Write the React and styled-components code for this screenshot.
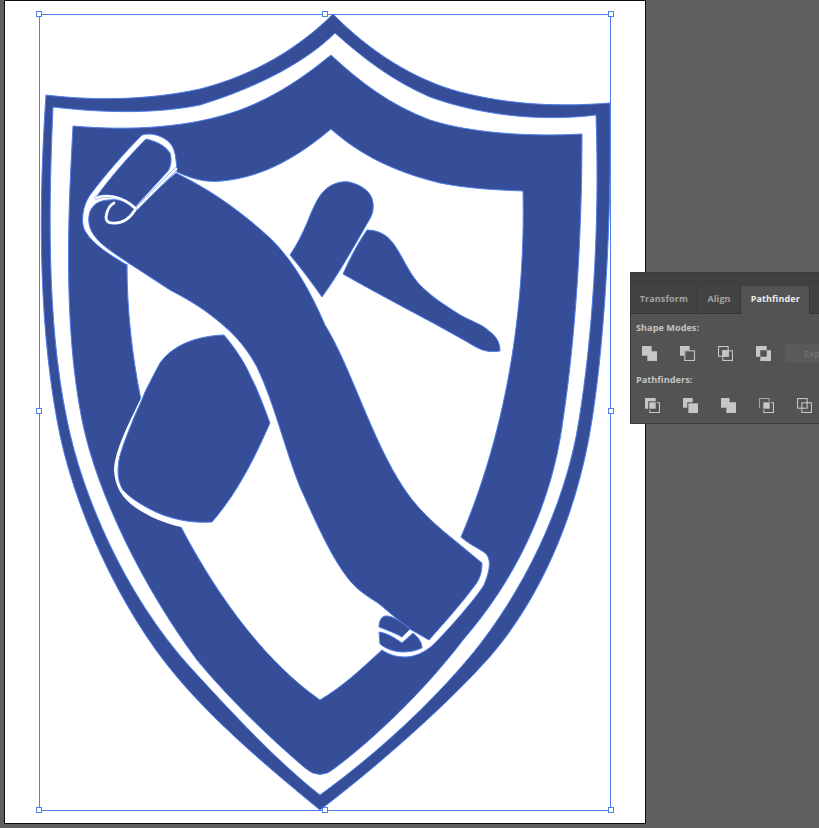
import React from "react";
import styled, { createGlobalStyle } from "styled-components";

const Global = createGlobalStyle`
  html, body { margin: 0; padding: 0; width: 100%; height: 100%; overflow: hidden; background: #5f5f5f; }
  #root { height: 100%; }
`;

const Workspace = styled.main`
  position: relative;
  width: 819px;
  height: 828px;
  overflow: hidden;
  background: #5f5f5f;
  padding-left: 4px;
  box-sizing: border-box;
`;

const Artboard = styled.div`
  width: 640px;
  height: 822px;
  background: #fff;
  border: 1px solid #0c0c0c;
`;

const Drawing = styled.svg`
  display: block;
  width: 640px;
  height: 822px;
`;

const Blue = styled.path`
  fill: #364e97;
  stroke: #4f7fec;
  stroke-width: 1;
`;

const Paper = styled.path`
  fill: #fff;
  stroke: ${(p) => (p.$edged ? "#4f7fec" : "none")};
  stroke-width: 1;
`;

const Edge = styled.path`
  fill: none;
  stroke: #4f7fec;
  stroke-width: 1;
`;

const Line = styled.path`
  fill: none;
  stroke: ${(p) => (p.$halo ? "#6f97ef" : "#fff")};
  stroke-width: ${(p) => (p.$halo ? 3.2 : 2.4)};
  stroke-linecap: round;
  stroke-linejoin: round;
`;

const Bounds = styled.rect`
  fill: none;
  stroke: #4f7fec;
  stroke-width: 1;
`;

const Handle = styled.rect`
  fill: #fff;
  stroke: #4f7fec;
  stroke-width: 1;
`;

const Panel = styled.aside`
  position: absolute;
  left: 630px;
  top: 272px;
  width: 200px;
  height: 152px;
  background: #535353;
  border: 1px solid #3a3a3a;
  border-right: 0;
  box-sizing: border-box;
  font-family: "Open Sans", "Liberation Sans", sans-serif;
`;

const TitleBar = styled.div`
  height: 13px;
  background: #404040;
`;

const Tabs = styled.div`
  display: flex;
  height: 27px;
  background: #404040;
  border-bottom: 1px solid #363636;
`;

const Tab = styled.div`
  width: ${(p) => p.$w}px;
  display: flex;
  align-items: center;
  justify-content: center;
  box-sizing: border-box;
  padding-bottom: 3px;
  font-size: 9px;
  font-weight: 700;
  letter-spacing: 0.1px;
  color: ${(p) => (p.$active ? "#ececec" : "#a2a2a2")};
  background: ${(p) => (p.$active ? "#535353" : "#434343")};
  border-right: 1px solid #363636;
  height: ${(p) => (p.$active ? "28px" : "27px")};
`;

const Heading = styled.div`
  font-size: 9.2px;
  font-weight: 700;
  line-height: 14px;
  color: #c4c4c4;
  padding-left: 5px;
  margin-top: ${(p) => p.$top}px;
`;

const IconRow = styled.div`
  display: flex;
  align-items: center;
  height: 20px;
  padding-left: ${(p) => p.$pad}px;
  gap: 23px;
  margin-top: ${(p) => p.$top}px;
`;

const Glyph = styled.svg`
  flex: none;
  display: block;
  width: 15px;
  height: 15px;
`;

const Expand = styled.button`
  flex: none;
  width: 60px;
  height: 19px;
  margin-left: -9px;
  padding: 0 0 0 19px;
  text-align: left;
  border: 0;
  background: #5a5a5a;
  color: #6f6f6f;
  font: 700 9px "Open Sans", "Liberation Sans", sans-serif;
`;

const G = "#c6c6c6";

const Solid = (p) => <rect {...p} fill={G} />;
const Hollow = (p) => <rect {...p} fill="none" stroke={G} strokeWidth="1" />;

const ICONS = {
  unite: <path d="M0 0h9v5h5v9H5V9H0z" fill={G} />,
  minus: (
    <>
      <Hollow x="4.5" y="4.5" width="9" height="9" />
      <path d="M0 0h9v4H4v5H0z" fill={G} />
    </>
  ),
  intersect: (
    <>
      <Hollow x="0.5" y="0.5" width="9" height="9" />
      <Hollow x="4.5" y="4.5" width="9" height="9" />
      <Solid x="4" y="4" width="6" height="6" />
    </>
  ),
  exclude: <path fillRule="evenodd" d="M0 0h10v4h4v10H4v-4H0zM4 4v6h6V4z" fill={G} />,
  divide: (
    <>
      <path d="M0 0h10v3H3v7H0z" fill={G} />
      <rect x="4" y="4" width="6" height="6" fill={G} />
      <path d="M11 4.5h2.5v9h-9V11" fill="none" stroke={G} />
    </>
  ),
  trim: (
    <>
      <path d="M0 0h9v4H4v5H0z" fill={G} />
      <rect x="5" y="5" width="9" height="9" fill={G} />
    </>
  ),
  merge: <path d="M0 0h8v4h6v10H5V9H0z" fill={G} />,
  crop: (
    <>
      <path d="M0.5 9.5v-9h9v3" fill="none" stroke="#a8a8a8" />
      <rect x="4" y="4" width="6" height="6" fill={G} />
      <path d="M11 4.5h2.5v9h-9V11" fill="none" stroke={G} />
    </>
  ),
  outline: (
    <>
      <Hollow x="0.5" y="0.5" width="9" height="9" />
      <Hollow x="4.5" y="4.5" width="9" height="9" />
    </>
  ),
};

const Icon = ({ name }) => <Glyph viewBox="0 0 14 14">{ICONS[name]}</Glyph>;

const OUTER =
  "M333,14 C300,47 255,75 200,89 C150,100 95,101 46,95 C41,170 35,300 57,420 C72,505 120,610 177,677 C215,722 265,765 320,810 C370,772 440,712 487,660 C530,612 575,530 592,420 C604,345 612,220 610,103 C560,107 510,105 460,92 C415,80 370,52 333,14 Z";
const GAP =
  "M335,33 C310,58 265,85 200,105 C150,115 95,112 53,107 C49,200 46,320 67,420 C82,495 125,595 190,667 C225,705 275,760 320,795 C375,755 430,705 473,653 C520,595 565,510 579,420 C592,340 600,230 596,115 C540,122 480,115 430,97 C395,82 365,60 335,33 Z";
const INNER =
  "M331,55 C310,72 280,95 240,110 C190,128 130,131 73,126 C69,200 62,320 82,420 C97,495 145,590 197,660 C230,700 270,738 305,768 Q320,781 335,768 C375,738 425,690 463,640 C515,580 552,505 563,420 C575,340 582,240 582,134 C530,137 470,133 430,120 C390,105 360,82 331,55 Z";
const FIELD =
  "M331,129 C360,155 395,172 440,183 C470,189 500,190 523,191 C525,280 515,410 461,537 L382,650 C362,668 345,685 320,700 C270,665 222,605 181,527 L141,400 C132,355 127,310 127,265 L177,172 C190,178 205,183 222,181 C265,177 300,155 331,129 Z";
const TOP_CURVE =
  "M177,172 C176,160 176,150 170,143 C163,136 152,132 142,135 C125,152 105,175 90,195 C83,205 80,222 85,231 C93,245 112,256 127,265";
const END_CURVE =
  "M461,537 C470,545 480,549 485,553 C491,558 491,568 484,585 C476,598 450,628 433,645 C425,652 415,657 405,657 C395,657 388,654 382,650";
const BODY =
  "M176,173 C215,192 245,215 270,238 C295,262 312,295 325,325 C350,365 372,440 403,487 C415,505 425,515 442,530 L482,563 C482,572 480,578 476,584 C462,603 445,622 429,640 L408,628 L378,603 C365,595 355,588 347,577 C330,555 315,520 300,487 C285,450 275,405 257,367 C245,345 232,332 217,320 C200,306 185,298 170,290 L127,262 C115,254 103,246 97,239 C90,231 88,224 89,216 C90,208 95,203 102,201 C115,198 128,200 136,208 Z";
const ROLL =
  "M146,139 C155,141 165,145 170,153 C172,160 171,166 168,171 L135,207 C128,199 112,193 97,196 C110,178 128,157 146,139 Z";
const CURL_TOP = "M96,198 C106,194 122,196 135,208";
const CURL_RING = "M135,210 C130,218 122,224 112,223 C108,223 106,221 106,217 C107,210 110,205 114,203";
const ROLL_LINE = "M176,169 L136,209";
const FOOT_A =
  "M379,627 C379,621 381,617 385,616 C392,615 402,622 410,629 L402,637 C395,633 387,630 379,627 Z";
const FOOT_B =
  "M379,632 C387,633 395,638 402,643 L413,633 C418,637 422,642 422,648 C415,651 409,652 403,652 C395,652 386,649 380,644 Z";
const HAMMER_HALO =
  "M141,398 C128,425 115,450 114,470 C115,485 120,495 132,505 C145,515 165,524 181,527 L212,523 L230,460 Z";
const HAMMER =
  "M224,335 C235,348 245,363 250,375 C258,390 264,407 270,423 C258,450 240,490 212,522 C195,523 180,521 163,515 C150,510 132,500 123,490 C118,482 117,472 119,460 C122,446 130,428 133,420 C137,410 140,405 145,392 C150,382 155,372 160,363 C172,346 195,336 224,335 Z";
const GRIP =
  "M290,255 C297,245 303,232 307,223 C313,208 318,196 325,190 C332,183 342,181 349,182 C362,185 372,192 373,203 C374,210 372,216 368,222 C352,250 338,275 322,297 C312,283 301,268 290,255 Z";
const HEAD =
  "M367,230 C378,230 387,235 393,243 C402,255 408,272 420,285 C433,298 445,305 457,313 C470,321 482,324 489,331 C496,336 500,342 500,351 C494,352 487,352 480,349 C473,346 468,342 462,339 C425,318 385,298 343,274 C350,258 358,243 367,230 Z";

const handles = [
  [39, 14], [325, 14], [611, 14],
  [39, 411], [611, 411],
  [39, 810], [325, 810], [611, 810],
];

export default function App() {
  return (
    <Workspace>
      <Global />
      <Artboard>
        <Drawing viewBox="5 1 640 822">
          <Blue d={OUTER} />
          <Paper d={GAP} $edged />
          <Blue d={INNER} />
          <Paper d={FIELD} $edged />
          <Paper d={`${TOP_CURVE} Z`} />
          <Edge d={TOP_CURVE} />
          <Paper d={`${END_CURVE} L384,625 L378,605 Z`} />
          <Edge d={END_CURVE} />
          <Blue d={BODY} />
          <Line d={ROLL_LINE} $halo />
          <Line d={ROLL_LINE} />
          <Blue d={ROLL} />
          <Line d={CURL_TOP} $halo />
          <Line d={CURL_RING} $halo />
          <Line d={CURL_TOP} />
          <Line d={CURL_RING} />
          <Blue d={FOOT_A} />
          <Blue d={FOOT_B} />
          <Paper d={HAMMER_HALO} />
          <Blue d={HAMMER} />
          <Blue d={GRIP} />
          <Blue d={HEAD} />
          <Bounds x="39.5" y="14.5" width="571" height="796" />
          {handles.map(([x, y]) => (
            <Handle key={`${x}-${y}`} x={x - 2.5} y={y - 2.5} width="5" height="5" />
          ))}
        </Drawing>
      </Artboard>
      <Panel>
        <TitleBar />
        <Tabs>
          <Tab $w={67}>Transform</Tab>
          <Tab $w={44}>Align</Tab>
          <Tab $w={69} $active>Pathfinder</Tab>
          <Tab $w={20} />
        </Tabs>
        <Heading $top={7}>Shape Modes:</Heading>
        <IconRow $pad={11} $top={8}>
          <Icon name="unite" />
          <Icon name="minus" />
          <Icon name="intersect" />
          <Icon name="exclude" />
          <Expand>Expand</Expand>
        </IconRow>
        <Heading $top={10}>Pathfinders:</Heading>
        <IconRow $pad={14} $top={8}>
          <Icon name="divide" />
          <Icon name="trim" />
          <Icon name="merge" />
          <Icon name="crop" />
          <Icon name="outline" />
        </IconRow>
      </Panel>
    </Workspace>
  );
}
